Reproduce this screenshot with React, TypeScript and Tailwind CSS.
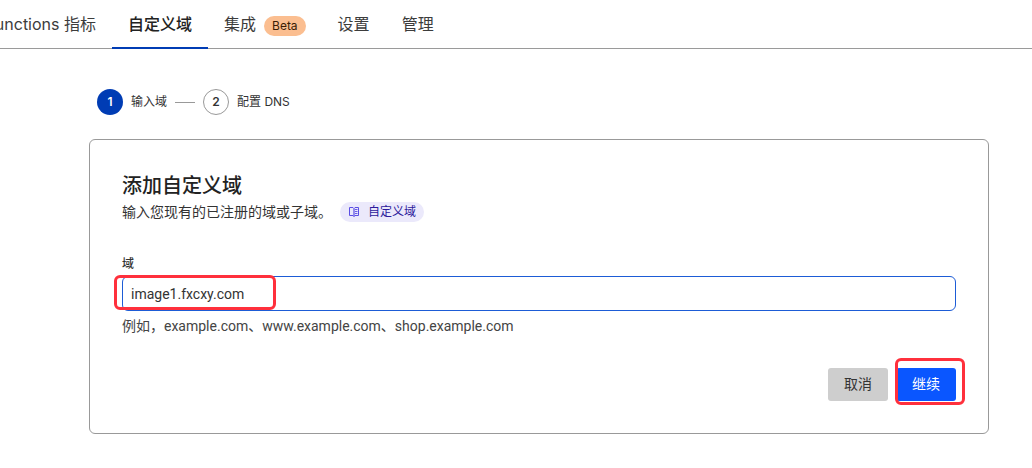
import { useState, type ReactNode } from "react";

type Tab = { label: string; badge?: string; active?: boolean };

const tabs: Tab[] = [
  { label: "自定义域", active: true },
  { label: "集成", badge: "Beta" },
  { label: "设置" },
  { label: "管理" },
];

function NavTabs() {
  return (
    <nav className="flex h-[49px] border-b border-[#9a9a9a] text-base leading-6 whitespace-nowrap text-[#3c3c3c]">
      <a href="#metrics" className="flex w-28 shrink-0 items-center justify-end overflow-hidden pr-4">
        Functions 指标
      </a>
      {tabs.map((tab) => (
        <a
          key={tab.label}
          href="#tab"
          aria-current={tab.active ? "page" : undefined}
          className={
            tab.active
              ? "-mb-px flex items-center border-b-2 border-[#003cb4] px-4 font-medium text-[#222222]"
              : "flex items-center gap-2 px-4"
          }
        >
          {tab.label}
          {tab.badge && (
            <span className="mt-1 rounded-full bg-[#fbbe90] px-2 text-xs leading-5 text-[#3a1d06]">{tab.badge}</span>
          )}
        </a>
      ))}
    </nav>
  );
}

function Step({ number, active, children }: { number: number; active?: boolean; children: ReactNode }) {
  return (
    <li className="flex items-center gap-2" aria-current={active ? "step" : undefined}>
      <span
        className={
          active
            ? "flex size-[26px] items-center justify-center rounded-full bg-[#003cb4] font-semibold text-white"
            : "flex size-[26px] items-center justify-center rounded-full border border-[#999999] font-semibold"
        }
      >
        {number}
      </span>
      <span>{children}</span>
    </li>
  );
}

function BookIcon() {
  return (
    <svg viewBox="0 0 12 12" className="size-3 text-[#5a4ee4]" fill="none" stroke="currentColor" aria-hidden="true">
      <path d="M6 2.5 5 1.5H1.5v8H5l1 1 1-1h3.5v-8H7l-1 1Z" />
      <path d="M6 2.5v8" strokeWidth="1.2" />
      <path d="M7 3.5h2.5M7 5.5h2.5M7 7.5h2.5" strokeWidth="0.9" />
    </svg>
  );
}

function Highlight({ className }: { className: string }) {
  return (
    <span
      aria-hidden="true"
      className={`pointer-events-none absolute rounded-md border-3 border-[#ff303c] ${className}`}
    />
  );
}

export default function App() {
  const [domain, setDomain] = useState("image1.fxcxy.com");

  return (
    <div className="min-h-screen bg-white font-[Inter,'Noto_Sans_CJK_SC',sans-serif] text-sm text-[#333333]">
      <NavTabs />
      <main className="pt-10 pr-[43px] pb-8 pl-[89px]">
        <ol className="flex items-center gap-2 px-2 text-xs">
          <Step number={1} active>
            输入域
          </Step>
          <li aria-hidden="true" className="h-px w-5 bg-[#999999]" />
          <Step number={2}>配置 DNS</Step>
        </ol>

        <form
          className="mt-6 rounded-md border border-[#999999] p-8"
          onSubmit={(event) => event.preventDefault()}
        >
          <h1 className="text-xl leading-7 font-medium text-[#222222]">添加自定义域</h1>
          <div className="mt-0.5 flex items-center gap-2 leading-5">
            <p>输入您现有的已注册的域或子域。</p>
            <a
              href="#docs"
              className="flex items-center gap-2 rounded-full bg-[#ebe9fb] px-2 text-xs leading-5 text-[#2c1a9c]"
            >
              <BookIcon />
              自定义域
            </a>
          </div>

          <label htmlFor="domain" className="mt-8 block text-xs leading-5 font-medium">
            域
          </label>
          <div className="relative mt-0.5">
            <input
              id="domain"
              type="text"
              value={domain}
              onChange={(event) => setDomain(event.target.value)}
              className="block h-[35px] w-full rounded-md border border-[#1d5cd6] px-2 font-[Roboto,'Noto_Sans_CJK_SC',sans-serif] outline-none"
            />
            <Highlight className="-top-px -left-2 h-[35px] w-[162px]" />
          </div>
          <p className="mt-1 font-[Roboto,'Noto_Sans_CJK_SC',sans-serif] leading-[22px] text-[#444444]">
            例如，example.com、www.example.com、shop.example.com
          </p>

          <div className="mt-[31px] flex justify-end gap-2">
            <button type="button" className="h-[33px] rounded-[3px] bg-[#cecece] px-4 pb-0.5">
              取消
            </button>
            <div className="relative">
              <button type="submit" className="block h-[33px] rounded-[3px] bg-[#0a56ff] px-4 pb-0.5 text-white">
                继续
              </button>
              <Highlight className="-top-2.5 -left-px h-[47px] w-[70px]" />
            </div>
          </div>
        </form>
      </main>
    </div>
  );
}
